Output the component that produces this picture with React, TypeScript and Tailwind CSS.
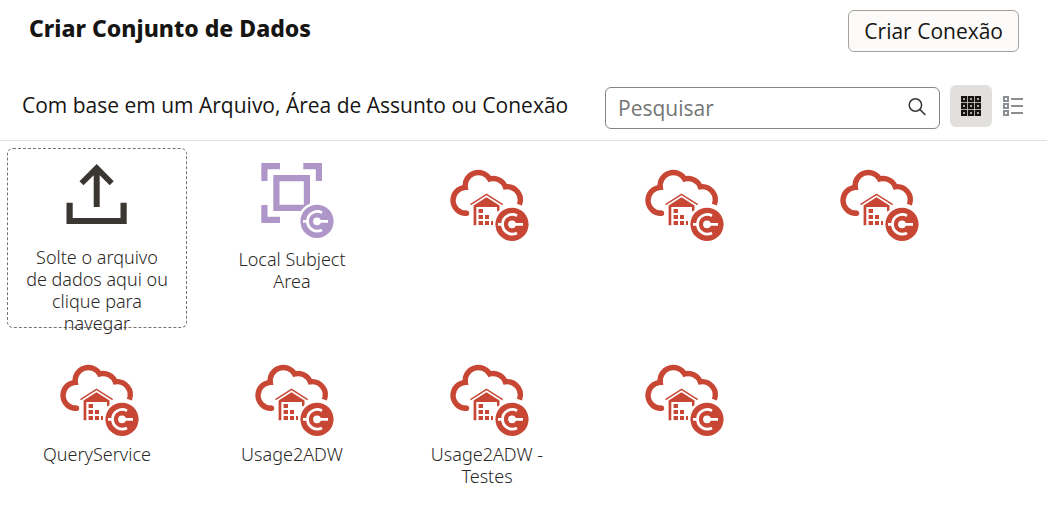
import React, { useState } from "react";

type IconKind = "upload" | "subject" | "warehouse";
type View = "grid" | "list";

interface Connection {
  id: string;
  icon: IconKind;
  label: string;
}

const connections: Connection[] = [
  { id: "local", icon: "subject", label: "Local Subject Area" },
  { id: "dw-1", icon: "warehouse", label: "" },
  { id: "dw-2", icon: "warehouse", label: "" },
  { id: "dw-3", icon: "warehouse", label: "" },
  { id: "query", icon: "warehouse", label: "QueryService" },
  { id: "usage", icon: "warehouse", label: "Usage2ADW" },
  { id: "usage-test", icon: "warehouse", label: "Usage2ADW - Testes" },
  { id: "dw-4", icon: "warehouse", label: "" },
];

const rows = [0, 7, 14];

function Badge({ x, y, color }: { x: number; y: number; color: string }) {
  return (
    <g transform={`translate(${x} ${y})`}>
      <circle r="19" fill="#fff" />
      <circle r="16.6" fill={color} />
      <g fill="none" stroke="#fff" strokeWidth="2.8">
        <path d="M5 -8.6A9.8 9.8 0 1 0 5 8.6" />
        <path d="M-14 0H-9M0 0H11" />
      </g>
      <circle r="3.9" fill="#fff" />
    </g>
  );
}

function UploadIcon() {
  return (
    <g fill="#3a3631">
      <path d="M47.7 15 64.7 32.3 60.7 36.2 50.7 26.2V58H44.7V26.2L34.5 36.2 30.5 32.3Z" />
      <path d="M17.5 53.8H23.7V69H71.5V53.8H77.7V74.9H17.5Z" />
    </g>
  );
}

function SubjectIcon() {
  return (
    <>
      <g fill="none" stroke="#ae96c8" strokeWidth="6.2">
        <path d="M20.4 32V17.1H36M59.3 17.1H74.9V32M20.4 56V70.9H36" />
        <path d="M32.4 29.1H62.9V58.9H32.4Z" />
      </g>
      <Badge x={73} y={72.3} color="#ae96c8" />
    </>
  );
}

function WarehouseIcon() {
  return (
    <>
      <g fill="none" stroke="#c74634">
        <path
          d="M27.7 64.3A13 13 0 0 1 14 51.3A13 13 0 0 1 26.3 38.4A13.1 13.1 0 0 1 50.6 30A13 13 0 0 1 66.3 37.8A13.2 13.2 0 0 1 80.4 55.6"
          strokeWidth="5.4"
        />
        <path d="M31.5 55.7 47.5 45.3 63.7 55.7" strokeWidth="1.4" />
      </g>
      <g fill="#c74634">
        <circle cx="27.5" cy="64.2" r="2.7" />
        <path d="M47.5 48.3 60.5 56.6V64L58 62V58H37.3V76.3H34.6V56.6Z" />
        <path d="M39.6 60H44V64H39.6ZM39.6 66H44V70H39.6ZM46 66H50V70H46ZM39.6 72H44V76H39.6ZM46 72H50V76H46ZM52 72H54V76H52Z" />
      </g>
      <Badge x={73} y={75.3} color="#c74634" />
    </>
  );
}

function TileIcon({ kind }: { kind: IconKind }) {
  return (
    <svg viewBox="0 0 96 94" className="h-[94px] w-24 shrink-0" aria-hidden="true">
      {kind === "upload" && <UploadIcon />}
      {kind === "subject" && <SubjectIcon />}
      {kind === "warehouse" && <WarehouseIcon />}
    </svg>
  );
}

function SearchIcon() {
  return (
    <svg viewBox="0 0 20 20" className="size-5 shrink-0" fill="none" stroke="#3a3631" strokeWidth="1.5" aria-hidden="true">
      <circle cx="8.4" cy="7" r="6.2" />
      <path d="M12.8 11.4 18.4 17" />
    </svg>
  );
}

function GridIcon() {
  return (
    <svg viewBox="0 0 20 20" className="size-5" fill="none" stroke="#161513" strokeWidth="2.3" aria-hidden="true">
      {rows.map((y) => rows.map((x) => <rect key={`${x}-${y}`} x={x + 1} y={y + 1} width="4" height="4" />))}
    </svg>
  );
}

function ListIcon() {
  return (
    <svg viewBox="0 0 20 20" className="size-5" fill="none" stroke="#8b8e92" strokeWidth="2" aria-hidden="true">
      {rows.map((y) => (
        <g key={y}>
          <rect x="1" y={y + 1} width="4" height="4" />
          <path d={`M8 ${y + 3}H20`} />
        </g>
      ))}
    </svg>
  );
}

interface ViewButtonProps {
  label: string;
  active: boolean;
  onClick: () => void;
  children: React.ReactNode;
}

function ViewButton({ label, active, onClick, children }: ViewButtonProps) {
  return (
    <button
      type="button"
      aria-label={label}
      aria-pressed={active}
      onClick={onClick}
      className={`flex size-[42px] items-center justify-center rounded-md ${active ? "bg-[#e1e0dc]" : "bg-transparent"}`}
    >
      {children}
    </button>
  );
}

function ConnectionTile({ icon, label, dashed }: { icon: IconKind; label: string; dashed?: boolean }) {
  return (
    <button
      type="button"
      aria-label={label || "Conexão"}
      className={`flex size-[180px] flex-col items-center rounded-md border px-4 font-['Noto_Sans','Open_Sans',sans-serif] text-lg leading-[22px] font-light text-[#2b2927] ${
        dashed ? "gap-[3px] border-dashed border-[#77736f]" : "gap-[5px] border-transparent"
      }`}
    >
      <TileIcon kind={icon} />
      <span>{label}</span>
    </button>
  );
}

export default function App() {
  const [view, setView] = useState<View>("grid");
  const [query, setQuery] = useState("");
  const visible = connections.filter((c) => c.label.toLowerCase().includes(query.toLowerCase()));

  return (
    <main className="min-h-screen bg-white font-['Open_Sans','Noto_Sans',sans-serif] text-[#161513]">
      <header className="flex items-start justify-between pt-2.5 pr-7 pl-[29px]">
        <h1 className="font-['Noto_Sans','Open_Sans',sans-serif] text-[23px] leading-9 font-extrabold">Criar Conjunto de Dados</h1>
        <button type="button" className="h-[42px] rounded-md border border-[#a5a19d] bg-[#fcfbfa] px-[15px] pt-0.5 text-[21px]">
          Criar Conexão
        </button>
      </header>

      <div className="mt-[33px] flex items-start border-b border-[#e0dfdc] pr-[13px] pb-[11px] pl-[22px]">
        <h2 className="flex-1 text-[21px] leading-10">Com base em um Arquivo, Área de Assunto ou Conexão</h2>
        <div className="mt-0.5 mr-2.5 flex h-[42px] w-[335px] items-center rounded-md border border-[#8b8580] px-3">
          <input
            type="text"
            aria-label="Pesquisar"
            value={query}
            onChange={(e) => setQuery(e.target.value)}
            placeholder="Pesquisar"
            className="h-10 min-w-0 flex-1 text-[21px] leading-10 outline-none placeholder:text-[#757575]"
          />
          <SearchIcon />
        </div>
        <ViewButton label="Exibir em grade" active={view === "grid"} onClick={() => setView("grid")}>
          <GridIcon />
        </ViewButton>
        <ViewButton label="Exibir em lista" active={view === "list"} onClick={() => setView("list")}>
          <ListIcon />
        </ViewButton>
      </div>

      <section className={`flex gap-[15px] px-[7px] pt-[7px] ${view === "grid" ? "flex-wrap" : "flex-col"}`}>
        <ConnectionTile icon="upload" label="Solte o arquivo de dados aqui ou clique para navegar" dashed />
        {visible.map((c) => (
          <ConnectionTile key={c.id} icon={c.icon} label={c.label} />
        ))}
      </section>
    </main>
  );
}
